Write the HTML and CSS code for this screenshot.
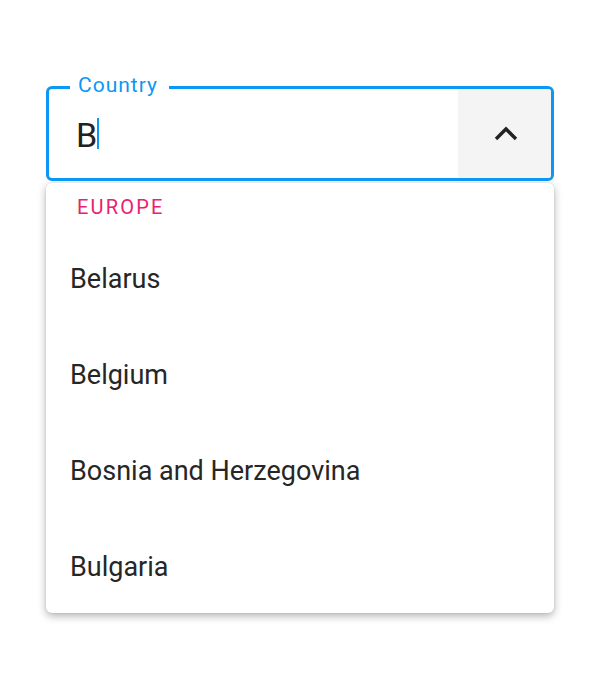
FILE: index.html
```html
<!DOCTYPE html>
<html lang="en">
<head>
<meta charset="utf-8">
<title>Country select</title>
<link rel="stylesheet" href="styles.css">
</head>
<body>
<div class="page">
  <div class="field">
    <span class="field-label">Country</span>
    <div class="field-input">
      <span class="typed">B</span><span class="caret"></span>
    </div>
    <div class="toggle">
      <svg class="chevron" width="24" height="15" viewBox="0 0 24 15" aria-hidden="true">
        <polyline points="2,13 12,3 22,13" fill="none" stroke="#222222" stroke-width="3.4" stroke-linecap="butt" stroke-linejoin="miter"/>
      </svg>
    </div>
  </div>
  <div class="menu">
    <div class="group-title">EUROPE</div>
    <div class="option">Belarus</div>
    <div class="option">Belgium</div>
    <div class="option">Bosnia and Herzegovina</div>
    <div class="option">Bulgaria</div>
  </div>
</div>
</body>
</html>
```

FILE: styles.css
```css
html, body {
  margin: 0;
  padding: 0;
  background: #ffffff;
}

body {
  font-family: Roboto, "Noto Sans", "Liberation Sans", sans-serif;
  color: #222222;
}

.page {
  padding: 86px 46px 60px 46px;
  width: 508px;
}

.field {
  position: relative;
  display: flex;
  height: 89px;
  border: 3px solid #0a98f2;
  border-radius: 6px;
  background: #ffffff;
}

.field-label {
  position: absolute;
  top: -14px;
  left: 21px;
  padding: 0 11px 0 8px;
  background: #ffffff;
  color: #0a98f2;
  font-size: 21px;
  line-height: 21px;
  letter-spacing: 1px;
}

.field-input {
  flex: 1;
  padding: 4px 0 0 27px;
  font-size: 34px;
  line-height: 85px;
  color: #222222;
  white-space: nowrap;
}

.caret {
  display: inline-block;
  width: 2px;
  height: 31px;
  background: #0a98f2;
  vertical-align: -2px;
}

.toggle {
  width: 93px;
  background: #f4f4f4;
  border-radius: 0 3px 3px 0;
  display: flex;
  align-items: center;
  justify-content: center;
}

.chevron {
  display: block;
  margin-left: 2px;
}

.menu {
  margin-top: 2px;
  background: #ffffff;
  border-radius: 6px;
  box-shadow: 0 3px 9px rgba(0, 0, 0, 0.3), 0 0 2px rgba(0, 0, 0, 0.12);
}

.group-title {
  padding: 12px 0 12px 31px;
  font-size: 20px;
  line-height: 24px;
  letter-spacing: 2.2px;
  color: #e8226c;
}

.option {
  padding-left: 24px;
  font-size: 27px;
  line-height: 96px;
  height: 96px;
  color: #262626;
}

.option:last-child {
  height: 94px;
}
```
